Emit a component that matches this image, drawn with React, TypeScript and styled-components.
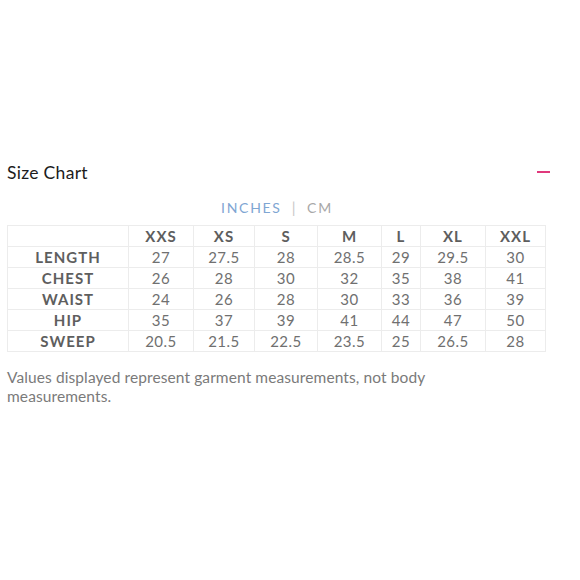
import styled, { createGlobalStyle } from "styled-components";

const GlobalStyle = createGlobalStyle`
  html, body {
    margin: 0;
    padding: 0;
    background: #ffffff;
  }
  body {
    font-family: Lato, "Liberation Sans", sans-serif;
  }
`;

const Page = styled.div`
  width: 580px;
  height: 580px;
  box-sizing: border-box;
  padding: 159px 7px 0 7px;
`;

const Header = styled.div`
  display: flex;
  align-items: center;
  justify-content: space-between;
  height: 26px;
`;

const Title = styled.h2`
  margin: 0;
  font-size: 17.5px;
  font-weight: 400;
  color: #1c1c1c;
  letter-spacing: 0.3px;
`;

const Toggle = styled.span`
  display: block;
  width: 13px;
  height: 2px;
  margin-right: 23px;
  background: #e0397c;
`;

const Units = styled.div`
  display: flex;
  justify-content: center;
  align-items: center;
  gap: 10px;
  margin: 12px 0 8px 0;
  padding-right: 26px;
  font-size: 14px;
  letter-spacing: 1.7px;
  height: 20px;
`;

const Unit = styled.span<{ $active?: boolean }>`
  color: ${(p) => (p.$active ? "#7fa6d3" : "#a8a8a8")};
`;

const Divider = styled.span`
  color: #c8c8c8;
  font-size: 15px;
`;

const Table = styled.table`
  border-collapse: collapse;
  table-layout: fixed;
  width: 538px;
`;

const Cell = styled.td<{ $head?: boolean }>`
  height: 20px;
  padding: 0;
  border: 1px solid #ececec;
  text-align: center;
  font-size: 15px;
  line-height: 20px;
  letter-spacing: ${(p) => (p.$head ? "1px" : "0.5px")};
  color: ${(p) => (p.$head ? "#5e5e5e" : "#707070")};
  font-weight: ${(p) => (p.$head ? 700 : 400)};
`;

const Note = styled.p`
  margin: 16px 0 0 0;
  max-width: 450px;
  font-size: 15.5px;
  line-height: 19px;
  color: #7a7a7a;
  letter-spacing: 0.1px;
`;

const sizes = ["XXS", "XS", "S", "M", "L", "XL", "XXL"];
const widths = [121, 65, 61, 63, 64, 39, 65, 60];

const rows: [string, string[]][] = [
  ["LENGTH", ["27", "27.5", "28", "28.5", "29", "29.5", "30"]],
  ["CHEST", ["26", "28", "30", "32", "35", "38", "41"]],
  ["WAIST", ["24", "26", "28", "30", "33", "36", "39"]],
  ["HIP", ["35", "37", "39", "41", "44", "47", "50"]],
  ["SWEEP", ["20.5", "21.5", "22.5", "23.5", "25", "26.5", "28"]],
];

export default function App() {
  return (
    <Page>
      <GlobalStyle />
      <Header>
        <Title>Size Chart</Title>
        <Toggle />
      </Header>
      <Units>
        <Unit $active>INCHES</Unit>
        <Divider>|</Divider>
        <Unit>CM</Unit>
      </Units>
      <Table>
        <colgroup>
          {widths.map((w, i) => (
            <col key={i} style={{ width: w }} />
          ))}
        </colgroup>
        <tbody>
          <tr>
            <Cell />
            {sizes.map((s) => (
              <Cell key={s} $head>
                {s}
              </Cell>
            ))}
          </tr>
          {rows.map(([label, values]) => (
            <tr key={label}>
              <Cell $head>{label}</Cell>
              {values.map((v, i) => (
                <Cell key={i}>{v}</Cell>
              ))}
            </tr>
          ))}
        </tbody>
      </Table>
      <Note>
        Values displayed represent garment measurements, not body measurements.
      </Note>
    </Page>
  );
}
